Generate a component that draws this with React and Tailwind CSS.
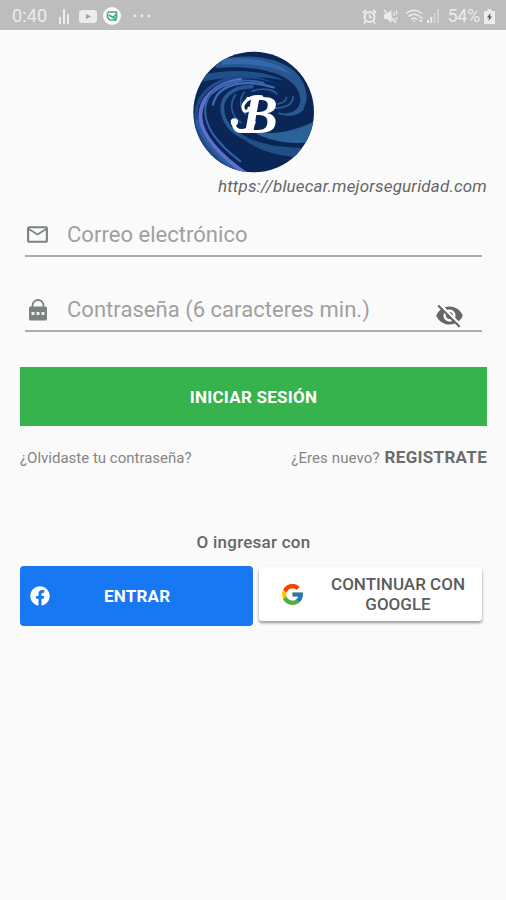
import { useState } from 'react';
import { MdOutlineEmail, MdVisibility, MdVisibilityOff } from 'react-icons/md';
import { FcGoogle } from 'react-icons/fc';
import { FaFacebook } from 'react-icons/fa';

function StatusBar() {
  return (
    <header className="flex h-[30px] items-center justify-between bg-[#bdbdbd] pr-[11px] pl-3 text-[#ececec]">
      <div className="flex items-center pt-0.5">
        <span className="w-[46px] text-[18px] leading-none tracking-[0.1px]">0:40</span>
        <svg className="h-4 w-3" viewBox="0 0 12 16" fill="currentColor">
          <path d="M1 9h2v7H1zM5 1h2v15H5zM9 6h2v10H9z" />
        </svg>
        <svg className="ml-[9px] h-[13px] w-[18px]" viewBox="0 0 18 13">
          <rect width="18" height="13" rx="3" fill="currentColor" />
          <path d="M7 4l5 2.5-5 2.5z" fill="#a0a0a0" />
        </svg>
        <svg className="ml-[6px] h-[18px] w-[18px]" viewBox="0 0 18 18" fill="none">
          <circle cx="9" cy="9" r="9" fill="#fafafa" />
          <path d="M5 5h8.500v6.500M4.500 5.500v5L7 13h3.500M6 8l4 2.500L13.500 7" stroke="#43a494" strokeWidth="1.600" />
          <path d="M10 10.500h3.500V14H11z" fill="#43a494" />
        </svg>
        <svg className="ml-[12px] h-1 w-[18px]" viewBox="0 0 18 4" fill="currentColor">
          <circle cx="2" cy="2" r="1.400" />
          <circle cx="9" cy="2" r="1.400" />
          <circle cx="16" cy="2" r="1.400" />
        </svg>
      </div>
      <div className="flex items-center pt-0.5">
        <svg className="h-[15px] w-[15px]" viewBox="0 0 15 15" fill="none" stroke="currentColor">
          <circle cx="7.500" cy="8" r="5" strokeWidth="2.200" />
          <path d="M1 4l3-3M14 4l-3-3M3.500 12.500L2 14.500M11.500 12.500l1.500 2" strokeWidth="2" />
          <path d="M7.500 5v3.500H10" strokeWidth="1.300" />
        </svg>
        <svg className="ml-[6px] h-[15px] w-[15px]" viewBox="0 0 15 15" fill="none" stroke="currentColor">
          <path d="M1 5h3l4.500-4v13L4 10H1z" fill="currentColor" stroke="none" />
          <path d="M1 1l12 13" strokeWidth="1.600" />
          <path d="M11 3v4M13.500 1.500v4M13.500 8v3.500M11 9v1.500" strokeWidth="1.300" />
        </svg>
        <svg className="ml-[7px] h-4 w-[20px]" viewBox="0 0 20 16" fill="none" stroke="currentColor" strokeWidth="1.600">
          <path d="M1 5.500q8-6.500 16 0M3.500 8.500q5.500-4.500 11 0M6 11.500q3-2.500 6 0" />
          <path d="M9 14.500l-1.500-2h3zM16 8l2 2.500h-4zM16 14.500l2-2.500h-4z" fill="currentColor" stroke="none" />
        </svg>
        <svg className="ml-0.5 h-3.5 w-3" viewBox="0 0 12 14" fill="currentColor">
          <path d="M0 11h2v3H0zM3.300 8h2v6h-2z" />
          <path d="M6.600 4h2v10h-2zM10 0h2v14h-2z" opacity=".5" />
        </svg>
        <span className="ml-2 text-[18px] leading-none tracking-[-0.3px]">54%</span>
        <svg className="ml-1 h-[15px] w-[11px]" viewBox="0 0 11 15">
          <path d="M3.500 0h4v2H11v13H0V2h3.500z" fill="currentColor" />
          <path d="M6.500 4L3 8.500h2L4.500 12 8 7.500H6z" fill="#555" />
        </svg>
      </div>
    </header>
  );
}

function Logo() {
  return (
    <svg className="h-[122px] w-[122px]" viewBox="38 31 366 366" role="img" aria-label="BlueCar">
      <defs>
        <clipPath id="logo-disc">
          <circle cx="220" cy="214" r="181" />
        </clipPath>
      </defs>
      <g clipPath="url(#logo-disc)">
        <rect x="38" y="31" width="366" height="366" fill="#0a2656" />
        {/* upper arms */}
        <path d="M110 58C210 35 310 50 355 105c30 38 32 85 5 108-16 14-42 13-62 6 38 2 60-12 62-40C362 120 275 68 105 82z" fill="#28578f" />
        <path d="M130 56c80-8 165 5 205 46C280 76 210 66 122 72z" fill="#3567ad" />
        <path d="M75 100c85-16 175-12 240 20C235 104 160 106 68 122z" fill="#20508a" />
        {/* left arms */}
        <path d="M305 137C220 97 116 110 72 165c-46 62-14 136 128 235h-50C70 350 30 270 45 200 68 108 190 75 305 137z" fill="#1f4b89" />
        <g fill="none" strokeLinecap="round">
          <path d="M180 118C100 130 58 178 60 230c4 60 60 116 140 172" stroke="#5f70cd" strokeWidth="12" />
          <path d="M250 126C160 106 88 136 76 194c-10 60 34 114 104 168" stroke="#3562a9" strokeWidth="6" />
          <path d="M280 140C190 112 112 130 98 192" stroke="#3d69ae" strokeWidth="7" />
          <path d="M215 138c-64 0-96 34-88 78 8 40 34 60 70 78" stroke="#285791" strokeWidth="11" />
          <path d="M50 240c14 54 50 96 104 140" stroke="#2d5ca0" strokeWidth="9" />
        </g>
        {/* lower right arms */}
        <path d="M200 262c60 28 130 14 204-20v62c-70 8-145 0-204-42z" fill="#2a6299" />
        <path d="M165 270c60 42 140 54 239 52l-24 28c-90 0-170-24-215-80z" fill="#205083" />
        {/* eye of the swirl */}
        <g fill="none" stroke="#2b5c99" strokeWidth="5" strokeLinecap="round">
          <path d="M165 162c-20 30-12 62 16 84M192 155c-16 20-14 46 4 66M215 152c25-10 62-8 74 8M338 168c0 24-26 36-56 34M318 170c0 10-10 18-26 20M296 218c28 10 52 4 72-12" />
        </g>
        <text x="182" y="276" fontFamily="'Liberation Serif', serif" fontSize="166" fontWeight="700" fontStyle="italic" fill="#fff">
          B
        </text>
        {/* flourishes around the initial */}
        <g fill="none" stroke="#fff" strokeLinecap="round">
          <path d="M244 168c-42-6-62 24-54 40 6 8 16 2 16-6" strokeWidth="9" />
          <path d="M220 245c-16 34-56 34-60 6" strokeWidth="12" />
        </g>
        <circle cx="162" cy="244" r="11" fill="#fff" />
      </g>
    </svg>
  );
}

function LockIcon() {
  return (
    <svg className="h-[22px] w-[18px]" viewBox="0 0 18 22" fill="none">
      <path d="M3.500 9V6.500a5.500 5.500 0 0 1 11 0V9" stroke="#78827f" strokeWidth="1.800" />
      <rect y="7.500" width="18" height="14" rx="1.500" fill="#78827f" />
      <path d="M2.500 13h3v3h-3zM7.500 13h3v3h-3zM12.500 13h3v3h-3z" fill="#eee" />
    </svg>
  );
}

export default function App() {
  const [email, setEmail] = useState('');
  const [password, setPassword] = useState('');
  const [showPassword, setShowPassword] = useState(false);

  return (
    <div className="h-[900px] w-[506px] overflow-hidden bg-[#fafafa] font-[Roboto,sans-serif] text-[#666]">
      <StatusBar />

      <main className="pt-[21px] pr-[19px] pl-5">
        <div className="flex justify-center">
          <Logo />
        </div>
        <p className="mt-[3px] text-right text-[17px] leading-5 tracking-[0.18px] italic">https://bluecar.mejorseguridad.com</p>

        <form onSubmit={(e) => e.preventDefault()}>
          <div className="mt-[18px] mr-[5px] ml-[5px] flex h-[43px] items-center border-b-2 border-[#a9afac]">
            <MdOutlineEmail className="h-[25px] w-[25px] text-[#78827f]" />
            <input
              type="email"
              aria-label="Correo electrónico"
              placeholder="Correo electrónico"
              value={email}
              onChange={(e) => setEmail(e.target.value)}
              className="ml-[17px] w-[350px] text-[22px] tracking-[0.03px] outline-none placeholder:text-[#a0a0a0]"
            />
          </div>

          <div className="mt-8 mr-[5px] ml-[5px] flex h-[43px] items-center border-b-2 border-[#a9afac]">
            <span className="flex w-[25px] justify-center">
              <LockIcon />
            </span>
            <input
              type={showPassword ? 'text' : 'password'}
              aria-label="Contraseña"
              placeholder="Contraseña (6 caracteres min.)"
              value={password}
              onChange={(e) => setPassword(e.target.value)}
              className="ml-[17px] w-[350px] text-[22px] tracking-[0.03px] outline-none placeholder:text-[#a0a0a0]"
            />
            <button type="button" aria-label="Mostrar contraseña" onClick={() => setShowPassword(!showPassword)} className="mt-3 ml-[18px] text-[#666]">
              {showPassword ? <MdVisibility className="h-[29px] w-[29px]" /> : <MdVisibilityOff className="h-[29px] w-[29px]" />}
            </button>
          </div>

          <button type="submit" className="mt-[35px] h-[59px] w-full bg-[#37b34e] pt-0.5 text-[17px] font-bold tracking-[0.25px] text-white">
            INICIAR SESIÓN
          </button>
        </form>

        <div className="mt-5 flex h-6 items-center justify-between">
          <a href="#" className="text-[15px] text-[#858585]">¿Olvidaste tu contraseña?</a>
          <p className="flex items-center gap-[5px] text-[15px] tracking-[0.1px] text-[#858585]">
            ¿Eres nuevo?
            <a href="#" className="text-[17px] font-bold tracking-[0.3px] text-[#6c6c6c]">REGISTRATE</a>
          </p>
        </div>

        <p className="mt-[60px] text-center text-[17px] leading-6 font-medium tracking-[0.25px]">O ingresar con</p>

        <div className="mt-3 flex items-start gap-1.5">
          <button className="flex h-[60px] w-[233px] items-center rounded-[4px] bg-[#1877f2] pl-2.5 text-white">
            <FaFacebook className="h-5 w-5" />
            <span className="ml-[54px] pt-0.5 text-[17px] font-bold tracking-[0.2px]">ENTRAR</span>
          </button>
          <button className="mt-px flex h-[54px] w-[223px] items-center rounded-[3px] bg-white pl-[21px] shadow-[0_2px_3px_rgba(0,0,0,0.4)]">
            <FcGoogle className="h-[25px] w-[25px]" />
            <span className="ml-[22px] w-[142px] text-center text-[17px] leading-5 font-medium text-[#5c5c5c]">
              CONTINUAR CON GOOGLE
            </span>
          </button>
        </div>
      </main>
    </div>
  );
}
